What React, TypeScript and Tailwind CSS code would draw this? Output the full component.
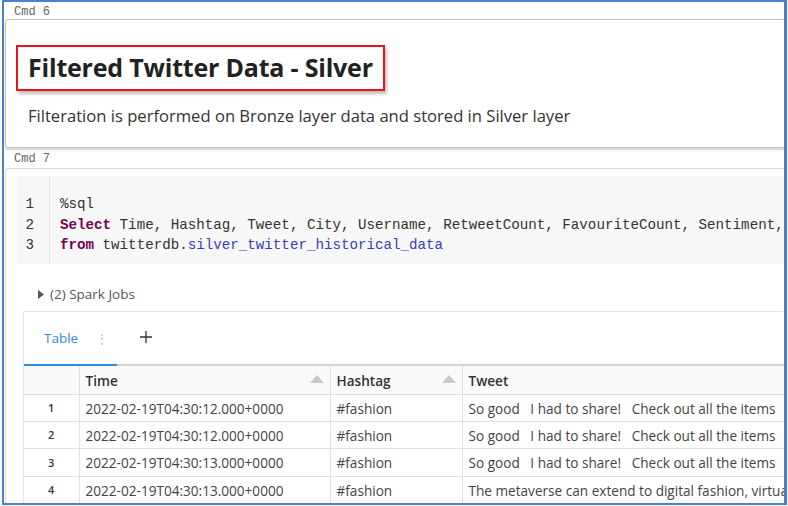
export default function App() {
  const ui = { fontFamily: '"Open Sans", "Noto Sans", sans-serif' }
  const mono = { fontFamily: '"Liberation Mono", "DejaVu Sans Mono", monospace' }
  const rows = [
    ['1', '2022-02-19T04:30:12.000+0000', '#fashion', 'So good \u00a0 I had to share! \u00a0 Check out all the items'],
    ['2', '2022-02-19T04:30:12.000+0000', '#fashion', 'So good \u00a0 I had to share! \u00a0 Check out all the items'],
    ['3', '2022-02-19T04:30:13.000+0000', '#fashion', 'So good \u00a0 I had to share! \u00a0 Check out all the items'],
    ['4', '2022-02-19T04:30:13.000+0000', '#fashion', 'The metaverse can extend to digital fashion, virtual clothing'],
  ]

  return (
    <div className="w-[788px] h-[506px] bg-white overflow-hidden" style={ui}>
      <div className="ml-[2px] w-[785px] h-[505px] border-t-2 border-l-2 border-r-[3px] border-b-2 border-[#4a7fd4] overflow-hidden">
        {/* Cmd 6 */}
        <div className="pl-[10px] h-[17px] text-[12px] leading-[20px] text-[#666]" style={mono}>Cmd 6</div>
        <div className="ml-[1px] -mr-4 h-[129px] border border-[#c4c4c4] rounded-[3px] shadow-[0_2px_2px_rgba(0,0,0,0.18)] pt-[25px] pl-[10px]">
          <div className="inline-flex items-center w-[369px] h-[46px] border-2 border-[#e8141b] shadow-[2px_3px_3px_rgba(0,0,0,0.25)] pl-[10px]">
            <span className="text-[25px] font-bold text-[#222] tracking-[-0.2px]">Filtered Twitter Data - Silver</span>
          </div>
          <div className="mt-[13px] pl-[12px] text-[16.6px] text-[#333]">
            Filteration is performed on Bronze layer data and stored in Silver layer
          </div>
        </div>

        {/* Cmd 7 */}
        <div className="mt-[3px] pl-[10px] h-[17px] text-[12px] leading-[17px] text-[#666]" style={mono}>Cmd 7</div>
        <div className="ml-[1px] -mr-4 h-[400px] border-t border-l border-[#dcdcdc] rounded-tl-[3px] pt-[7px] pl-[11px]">
          <div className="flex bg-[#f7f7f7] h-[88px]">
            <div className="w-[33px] shrink-0 border-r border-[#e2e2e2] pt-[18px] text-right pr-[15px] text-[14.2px] leading-[20.5px] text-[#333]" style={mono}>
              <div>1</div>
              <div>2</div>
              <div>3</div>
            </div>
            <div className="pl-[10px] pt-[18px] text-[14.2px] leading-[20.5px] text-[#333] whitespace-pre" style={mono}>
              <div>%sql</div>
              <div><span className="font-bold text-[#770055]">Select</span> Time, Hashtag, Tweet, City, Username, RetweetCount, FavouriteCount, Sentiment, Polarity</div>
              <div><span className="font-bold text-[#770055]">from</span> twitterdb.<span className="text-[#3b3bbd]">silver_twitter_historical_data</span></div>
            </div>
          </div>

          <div className="flex items-center h-[34px] mt-[13px] pl-[21px] text-[13.5px] text-[#555]">
            <svg width="6" height="9" viewBox="0 0 6 9" className="mr-[6px]"><path d="M0 0 L6 4.5 L0 9 Z" fill="#555" /></svg>
            <span>(2) Spark Jobs</span>
          </div>

          <div className="ml-[6px] border-t border-l border-[#e4e4e4]">
            <div className="flex items-end h-[54px] border-b-2 border-[#d4d4d4]">
              <div className="w-[93px] h-[54px] flex items-center pl-[20px] pt-[1px] border-b-2 border-[#2a8ae6] -mb-[2px]">
                <span className="text-[13.5px] text-[#2a8ae6] font-medium">Table</span>
                <span className="ml-[18px] text-[12px] text-[#bbb] leading-none">⋮</span>
              </div>
              <div className="h-[54px] flex items-center pl-[22px]">
                <svg width="14" height="14" viewBox="0 0 14 14"><path d="M7 1 V13 M1 7 H13" stroke="#333" strokeWidth="1.3" /></svg>
              </div>
            </div>
            <table className="table-fixed w-[900px] border-collapse text-[13.6px] text-[#444]">
              <colgroup>
                <col className="w-[55px]" />
                <col className="w-[251px]" />
                <col className="w-[132px]" />
                <col className="w-[462px]" />
              </colgroup>
              <thead>
                <tr className="h-[28px] bg-[#fafafa]">
                  <th className="border-r border-b border-[#e0e0e0]"></th>
                  <th className="border-r border-b border-[#e0e0e0] text-left pl-[6px] pt-[2px] font-semibold text-[#333]">
                    <div className="flex items-center justify-between pr-[6px]">
                      <span>Time</span>
                      <svg width="14" height="8" viewBox="0 0 14 8" className="-mt-[3px]"><path d="M0 8 L7 0 L14 8 Z" fill="#c8c8c8" /></svg>
                    </div>
                  </th>
                  <th className="border-r border-b border-[#e0e0e0] text-left pl-[6px] pt-[2px] font-semibold text-[#333]">
                    <div className="flex items-center justify-between pr-[6px]">
                      <span>Hashtag</span>
                      <svg width="14" height="8" viewBox="0 0 14 8" className="-mt-[3px]"><path d="M0 8 L7 0 L14 8 Z" fill="#c8c8c8" /></svg>
                    </div>
                  </th>
                  <th className="border-b border-[#e0e0e0] text-left pl-[6px] pt-[2px] font-semibold text-[#333]">Tweet</th>
                </tr>
              </thead>
              <tbody>
                {rows.map((r) => (
                  <tr key={r[0]} className="h-[27.4px]">
                    <td className="border-r border-b border-[#e0e0e0] text-center pt-[1px] text-[11px] font-semibold text-[#333]">{r[0]}</td>
                    <td className="border-r border-b border-[#e0e0e0] pl-[6px] pt-[2px] whitespace-nowrap">{r[1]}</td>
                    <td className="border-r border-b border-[#e0e0e0] pl-[6px] pt-[2px] whitespace-nowrap">{r[2]}</td>
                    <td className="border-b border-[#e0e0e0] pl-[6px] pt-[2px] whitespace-nowrap overflow-hidden">{r[3]}</td>
                  </tr>
                ))}
              </tbody>
            </table>
          </div>
        </div>
      </div>
    </div>
  )
}
